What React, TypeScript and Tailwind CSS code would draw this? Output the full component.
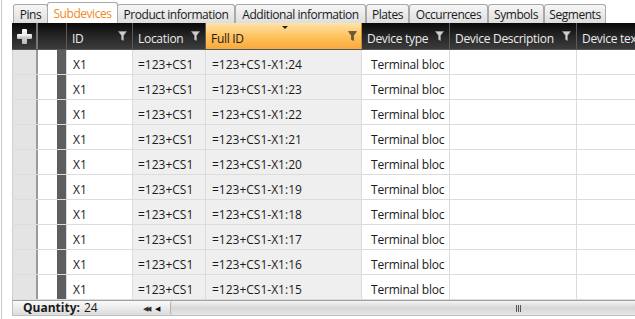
import React from 'react';

const tabs = ['Pins', 'Subdevices', 'Product information', 'Additional information', 'Plates', 'Occurrences', 'Symbols', 'Segments'];
const tabW = [35, 71, 118, 131, 43, 79, 56, 62];

const Funnel = ({ dark = false }: { dark?: boolean }) => (
  <svg width="9" height="10" viewBox="0 0 9 10" className="shrink-0">
    <path d="M0.5 0.5 H8.5 L5.5 4.5 V9.5 L3.5 8.5 V4.5 Z" fill={dark ? '#6b5a3a' : '#cfcfcf'} stroke={dark ? '#4a3d25' : '#9a9a9a'} strokeWidth="0.6" />
  </svg>
);

const HeadCell = ({ label, w, filter = true }: { label: string; w: string; filter?: boolean }) => (
  <div className={`${w} shrink-0 h-full flex items-center justify-between pl-[5px] pr-[5px] border-r border-[#5a5a5a] text-[#ececec] whitespace-nowrap overflow-hidden tracking-[-0.3px]`}>
    <span className="pt-[6px]">{label}</span>
    {filter && <Funnel />}
  </div>
);

const rows = [24, 23, 22, 21, 20, 19, 18, 17, 16, 15];

export default function App() {
  return (
    <div className="relative w-[635px] h-[319px] overflow-hidden bg-white text-[12px] text-[#1a1a1a]" style={{ fontFamily: '"Open Sans", "Noto Sans", sans-serif' }}>
      <div className="absolute left-[1px] top-0 bottom-0 w-px bg-[#c8c8c8]" />
      <div className="ml-[12px] w-[640px]">
        {/* tabs */}
        <div className="flex items-end h-[23px] pl-px">
          {tabs.map((t, i) => {
            const active = i === 1;
            return (
              <div
                key={t}
                style={{ width: tabW[i] }}
                className={`shrink-0 flex items-center justify-center pt-[2px] border border-b-0 rounded-t-[3px] whitespace-nowrap tracking-[-0.45px] ${
                  active
                    ? 'h-[21px] bg-white border-[#a9a9a9] text-[#f08a1c] -mx-px z-10'
                    : 'h-[19px] bg-gradient-to-b from-[#f6f6f6] to-[#dedede] border-[#a9a9a9] text-[#1a1a1a]'
                }`}
              >
                {t}
              </div>
            );
          })}
        </div>
        {/* header */}
        <div className="flex h-[27px] bg-gradient-to-b from-[#0a0a0a] via-[#262626] to-[#3c3c3c] border-b border-[#555]">
          <div className="w-[26px] shrink-0 h-full flex items-center justify-center border-r-2 border-[#777]">
            <div className="relative w-[15px] h-[15px]">
              <div className="absolute left-[5px] top-0 w-[5px] h-[15px] bg-gradient-to-b from-[#ffffff] to-[#b8b8b8] rounded-[1px]" />
              <div className="absolute left-0 top-[5px] w-[15px] h-[5px] bg-gradient-to-b from-[#ffffff] to-[#b8b8b8] rounded-[1px]" />
            </div>
          </div>
          <div className="w-[29px] shrink-0 h-full border-r border-[#5a5a5a]" />
          <HeadCell label="ID" w="w-[66px]" />
          <HeadCell label="Location" w="w-[73px]" />
          <div className="relative w-[156px] shrink-0 h-full flex items-center justify-between pl-[5px] pr-[4px] bg-gradient-to-b from-[#ffe3a8] via-[#ffc35e] to-[#f9a83a] text-[#1a1a1a] border-r border-[#c98a2a] tracking-[-0.3px]">
            <span className="pt-[6px]">Full ID</span>
            <Funnel dark />
            <div className="absolute left-[76px] top-[3px] w-0 h-0 border-l-[3px] border-r-[3px] border-t-[3px] border-l-transparent border-r-transparent border-t-[#222]" />
          </div>
          <HeadCell label="Device type" w="w-[88px]" />
          <HeadCell label="Device Description" w="w-[127px]" />
          <HeadCell label="Device text" w="w-[80px]" filter={false} />
        </div>
        {/* rows */}
        {rows.map((n) => (
          <div key={n} className="flex h-[25px] border-b border-[#dcdcdc]">
            <div className="w-[26px] shrink-0 h-full bg-[#e4e4e4] border-r-2 border-[#9a9a9a] border-l border-l-[#d0d0d0]" />
            <div className="w-[29px] shrink-0 h-full flex border-r border-[#dcdcdc]">
              <div className="flex-1 bg-white" />
              <div className="w-[9px] bg-[#5e5e5e]" />
            </div>
            <div className="w-[66px] shrink-0 h-full flex items-center pl-[6px] pt-[6px] border-r border-[#dcdcdc] bg-white">X1</div>
            <div className="w-[73px] shrink-0 h-full flex items-center pl-[5px] pt-[6px] border-r border-[#dcdcdc] bg-[#efefef]">=123+CS1</div>
            <div className="w-[156px] shrink-0 h-full flex items-center pl-[6px] pt-[6px] border-r border-[#dcdcdc] bg-[#efefef]">=123+CS1-X1:{n}</div>
            <div className="w-[88px] shrink-0 h-full flex items-center pl-[9px] pt-[6px] border-r border-[#dcdcdc] bg-white whitespace-nowrap overflow-hidden tracking-[-0.2px]">Terminal bloc</div>
            <div className="w-[127px] shrink-0 h-full border-r border-[#dcdcdc] bg-white" />
            <div className="w-[80px] shrink-0 h-full bg-white" />
          </div>
        ))}
        {/* footer */}
        <div className="flex h-[16px] border-t border-[#a0a0a0] border-b border-b-[#c0c0c0] bg-gradient-to-b from-[#fafafa] to-[#dcdcdc]">
          <div className="w-[128px] shrink-0 flex items-center pl-[10px] border-l border-[#c0c0c0] whitespace-nowrap">
            <span className="font-bold">Quantity:</span>
            <span className="ml-[4px]">24</span>
          </div>
          <div className="w-[30px] shrink-0 flex items-center gap-[6px] pl-[3px]">
            <span className="text-[7px] leading-none text-[#333] tracking-[-2px]">◀◀</span>
            <span className="text-[7px] leading-none text-[#111]">◀</span>
          </div>
          <div className="flex-1 flex items-center justify-start border-l border-[#b0b0b0] bg-gradient-to-b from-[#f4f4f4] via-[#d6d6d6] to-[#e8e8e8] rounded-l-[3px]">
            <div className="ml-[345px] flex gap-px">
              <div className="w-px h-[7px] bg-[#555]" />
              <div className="w-px h-[7px] bg-[#555]" />
              <div className="w-px h-[7px] bg-[#555]" />
            </div>
          </div>
        </div>
      </div>
    </div>
  );
}
